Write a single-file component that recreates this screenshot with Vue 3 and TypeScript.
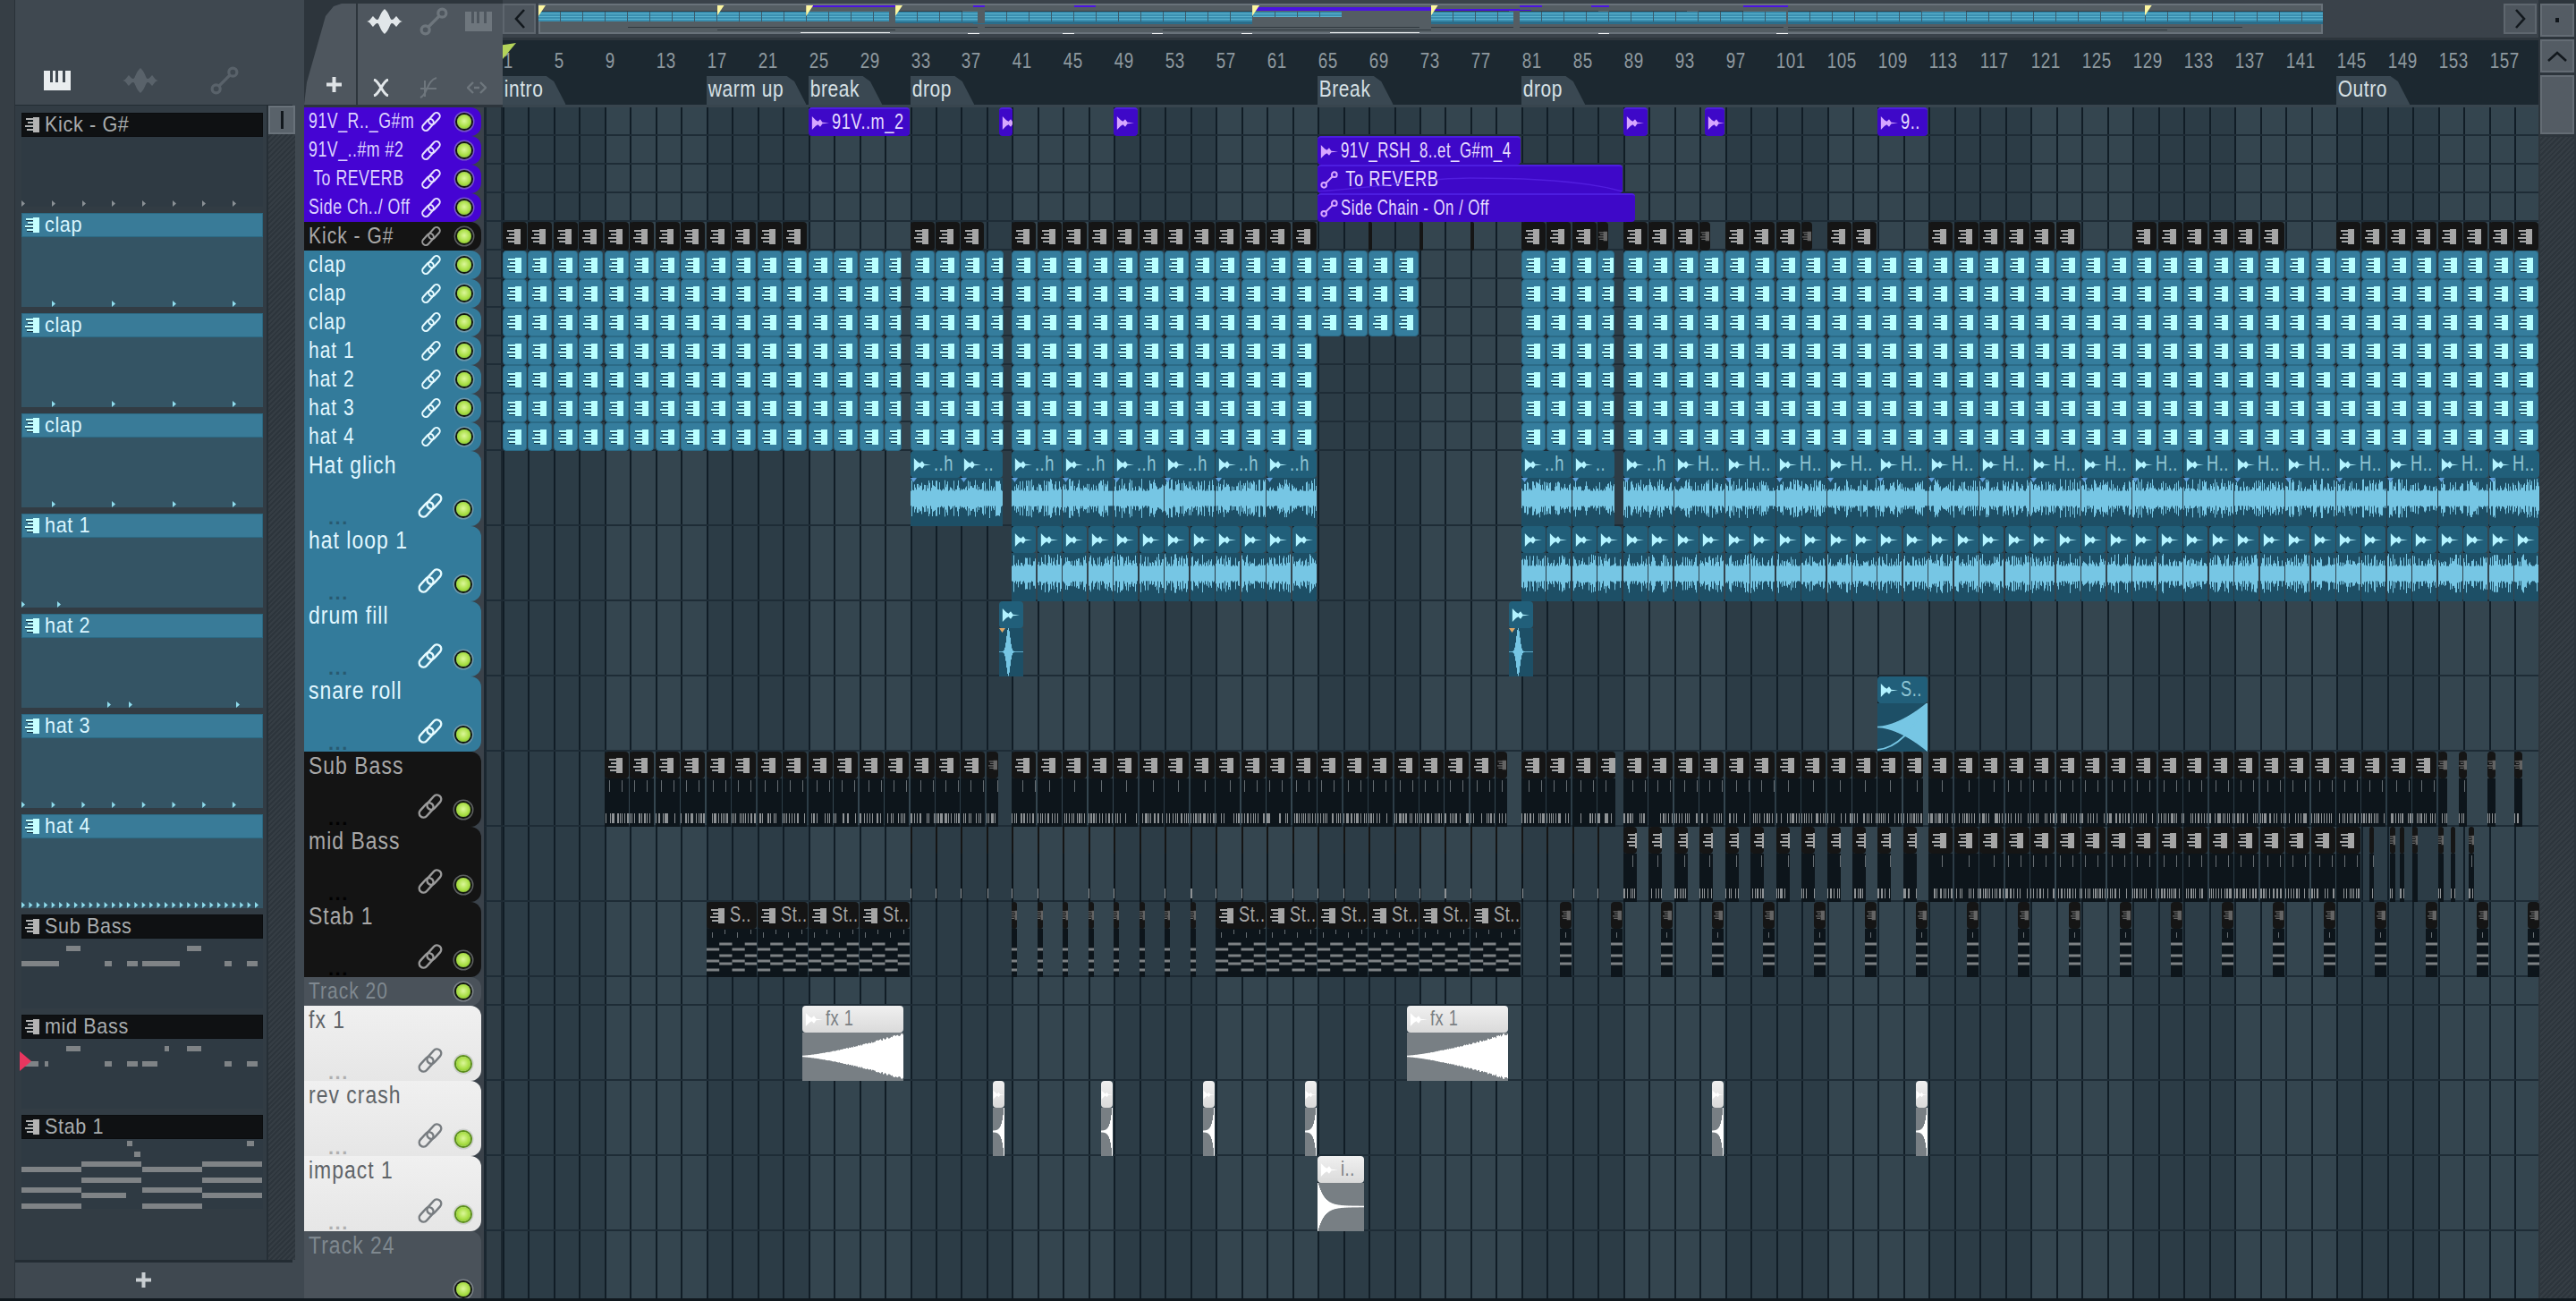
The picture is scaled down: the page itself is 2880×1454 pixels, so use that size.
<template>
  <div class="daw">
    <svg class="defs" width="0" height="0">
      <symbol id="ic-note" viewBox="0 0 16 17">
        <path d="M1 3h8v1H1z M3 7h6v1H3z M0 11h9v1H0z M2 15h7v1H2z" fill="#06141c" opacity="0.7" />
        <path d="M9 0h7v17H9z M1 1h8v2H1z M3 5h6v2H3z M0 9h9v2H0z M2 13h7v2H2z" fill="currentColor" />
      </symbol>
      <symbol id="ic-play" viewBox="0 0 24 18">
        <path d="M1 0 L6 5 L9 7 L12 4 L15 8 L24 9 L15 10 L12 14 L9 11 L6 13 L1 18 Z" fill="currentColor" />
      </symbol>
      <symbol id="ic-auto" viewBox="0 0 24 24">
        <g fill="none" stroke="currentColor" stroke-width="2.4">
          <circle cx="5" cy="19" r="3.4" />
          <circle cx="19" cy="5" r="3.4" />
          <path d="M7.5 16.5 L16.5 7.5" />
        </g>
      </symbol>
      <symbol id="ic-link" viewBox="0 0 24 24">
        <g fill="none" stroke="currentColor" stroke-width="2">
          <rect x="11.7" y="1" width="7.6" height="15" rx="3.8" transform="rotate(42 15.5 8.5)" />
          <rect x="4.7" y="8" width="7.6" height="15" rx="3.8" transform="rotate(42 8.5 15.5)" />
        </g>
      </symbol>
      <symbol id="ic-wave" viewBox="0 0 40 28">
        <path d="M0 14 C3 14 5 10 7 8 C9 10 10 12 12 12 C14 12 15 4 20 0 C25 4 26 12 28 12 C30 12 31 10 33 8 C35 10 37 14 40 14 C37 14 35 18 33 20 C31 18 30 16 28 16 C26 16 25 24 20 28 C15 24 14 16 12 16 C10 16 9 18 7 20 C5 18 3 14 0 14Z" fill="currentColor" />
      </symbol>
      <symbol id="ic-keys" viewBox="0 0 30 22">
        <path fill-rule="evenodd" d="M0 0H30V22H0Z M7 0h3v13H7Z M13 0h3v13h-3Z M21 0h3v13h-3Z" fill="currentColor" />
      </symbol>
    </svg>

    <aside class="picker">
      <div class="picker-edge"></div>
      <div class="picker-main">
        <div class="picker-tabs">
          <svg class="pt on" width="30" height="22"><use href="#ic-keys" /></svg>
          <svg class="pt" width="40" height="28"><use href="#ic-wave" /></svg>
          <svg class="pt" width="32" height="32"><use href="#ic-auto" /></svg>
        </div>
        <div class="picker-list">
          <div class="items">
            <div v-for="it in items" :key="it.top" class="item" :class="it.color">
              <div class="item-head">
                <svg class="item-ico" width="16" height="17"><use href="#ic-note" /></svg>
                <span class="item-name">{{ it.name }}</span>
              </div>
              <svg class="item-body" width="270" height="78">
                <polygon v-for="x in it.ticks" :key="x" class="tick" :points="`${x},${it.tickY} ${x + 4},${it.tickY + 3.5} ${x},${it.tickY + 7}`" />
                <rect v-for="(n, i) in it.notes" :key="i" class="note" :x="n[0]" :y="n[1]" :width="n[2]" height="6" />
              </svg>
            </div>
          </div>
          <div class="picker-scroll">
            <div class="scroll-btn"><i></i></div>
            <div class="hatch"></div>
          </div>
          <div class="marker"></div>
        </div>
        <div class="picker-add">
          <svg width="17" height="17"><path d="M6.5 0h4v6.5H17v4h-6.5V17h-4v-6.5H0v-4h6.5z" fill="#c9ced2" /></svg>
        </div>
      </div>
    </aside>

    <section class="tracks-col">
      <div class="tool-tabs">
        <div class="tab-add">
          <svg width="17" height="17"><path d="M6.5 0h4v6.5H17v4h-6.5V17h-4v-6.5H0v-4h6.5z" fill="#dfe3e6" /></svg>
        </div>
        <div class="tab-tools">
          <div class="tool-row">
            <svg class="tool lit" width="40" height="28"><use href="#ic-wave" /></svg>
            <svg class="tool" width="32" height="32"><use href="#ic-auto" /></svg>
            <svg class="tool" width="30" height="22"><use href="#ic-keys" /></svg>
          </div>
          <div class="tool-row low">
            <svg class="tool lit" width="20" height="20" viewBox="0 0 20 20"><path d="M2 1 C8 2 12 18 18 19 M18 1 C12 2 8 18 2 19" fill="none" stroke="currentColor" stroke-width="3" /></svg>
            <svg class="tool" width="22" height="24" viewBox="0 0 22 24"><path d="M2 23 C10 20 9 4 20 1 M2 13 H20 M7 4 V22" fill="none" stroke="currentColor" stroke-width="2" /></svg>
            <svg class="tool" width="22" height="14" viewBox="0 0 22 14"><path d="M7 1 L1 7 L7 13 M15 1 L21 7 L15 13 M8 7 H14" fill="none" stroke="currentColor" stroke-width="2.4" /></svg>
          </div>
        </div>
      </div>
      <div v-for="(t, i) in tracks" :key="i" class="track" :class="t.height">
        <div class="track-label" :class="t.color">
          <span class="track-name">{{ t.name }}</span>
          <div class="track-ctl">
            <span v-if="t.height === 'tall'" class="dots">...</span>
            <svg v-if="t.link" class="link" viewBox="0 0 24 24"><use href="#ic-link" /></svg>
            <span class="led"></span>
          </div>
        </div>
        <div class="gutter"></div>
      </div>
    </section>

    <section class="arrange">
      <div class="ov-bar">
        <div class="nav-btn">
          <svg width="14" height="24" viewBox="0 0 14 24"><path d="M12 2 L3 12 L12 22" fill="none" stroke="#12181d" stroke-width="2.6" /></svg>
        </div>
        <div class="overview">
          <div
            v-for="(s, i) in overviewSpans"
            :key="i"
            class="ov-span"
            :class="s.cls"
            :style="{ left: s.left + 'px', top: s.top + 'px', width: s.width + 'px', height: s.height + 'px' }"
          ></div>
          <div v-for="m in markers" :key="m.bar" class="ov-flag" :style="{ left: ovX(m.bar) + 'px' }"></div>
        </div>
        <div class="nav-btn">
          <svg width="14" height="24" viewBox="0 0 14 24"><path d="M2 2 L11 12 L2 22" fill="none" stroke="#12181d" stroke-width="2.6" /></svg>
        </div>
      </div>
      <div class="timeline">
        <div class="ruler">
          <span v-for="n in barNumbers" :key="n">{{ n }}</span>
        </div>
        <div class="marks">
          <span v-for="m in markers" :key="m.bar" class="mark" :style="{ left: barX(m.bar) + 'px' }">{{ m.name }}</span>
        </div>
        <div class="playhead"></div>
      </div>
      <div class="rows">
        <div v-for="r in rows" :key="r.id" class="row" :class="r.height">
          <div
            v-for="(c, i) in r.clips"
            :key="i"
            class="clip"
            :class="[r.color, r.kind, r.wave, { thin: c.width < 15, hair: c.width < 6 }]"
            :style="{ left: c.left + 'px', width: c.width + 'px' }"
          >
            <div class="clip-head">
              <svg v-if="r.kind === 'pat'" class="ico-note"><use href="#ic-note" /></svg>
              <svg v-else-if="r.kind === 'auto'" class="ico-auto"><use href="#ic-auto" /></svg>
              <svg v-else class="ico-play"><use href="#ic-play" /></svg>
              <span v-if="c.label" class="clip-name" :class="{ long: c.label.length > 15 }">{{ c.label }}</span>
            </div>
            <svg v-if="r.height === 'tall'" class="clip-body" :width="c.width" height="53">
              <path class="p2" :d="c.d2" />
              <path class="p1" :d="c.d1" />
            </svg>
            <i v-if="r.height === 'tall' && (r.wave === 'spike' || (r.wave === 'noise' && c.label))" class="slice"></i>
            <svg v-if="c.d3" class="clip-curve" :width="c.width" height="30"><path :d="c.d3" /></svg>
          </div>
        </div>
      </div>
    </section>

    <aside class="vscroll">
      <div class="vbtn"><i></i></div>
      <div class="vbtn">
        <svg width="24" height="12" viewBox="0 0 24 12"><path d="M2 11 L12 2 L22 11" fill="none" stroke="#12181d" stroke-width="2.6" /></svg>
      </div>
      <div class="vthumb"></div>
      <div class="hatch"></div>
    </aside>
  </div>
</template>

<script setup lang="ts">
const BAR = 14.236
const OV_BAR = 12.47

type Clip = { left: number; width: number; label?: string; d1?: string; d2?: string; d3?: string }
type Seg = [number, number, string?]

const barX = (b: number) => (b - 1) * BAR
const ovX = (b: number) => (b - 1) * OV_BAR

const barNumbers: number[] = []
for (let n = 1; n <= 157; n += 4) barNumbers.push(n)

const markers = [
  { bar: 1, name: 'intro' },
  { bar: 17, name: 'warm up' },
  { bar: 25, name: 'break' },
  { bar: 33, name: 'drop' },
  { bar: 65, name: 'Break' },
  { bar: 81, name: 'drop' },
  { bar: 145, name: 'Outro' },
]

// repeat a clip every `step` bars, the last one gets cut at `to`
function run(from: number, to: number, step = 2, len = step, label?: string): Seg[] {
  const out: Seg[] = []
  for (let b = from; b < to; b += step) out.push([b, Math.min(len, to - b), label])
  return out
}

let seed = 7
function rnd() {
  seed = (seed * 16807) % 2147483647
  return seed / 2147483647
}

function vline(x: number, y1: number, y2: number) {
  return `M${x + 0.5} ${y1.toFixed(1)}V${y2.toFixed(1)}`
}

function wave(w: number, h: number, kind: string) {
  let d = ''
  const mid = h / 2
  for (let x = 0; x < w; x++) {
    const t = x / Math.max(w - 1, 1)
    let a = 0
    if (kind === 'noise') {
      const r = rnd()
      a = 0.36 + r * r * 0.6
    }
    if (kind === 'rise') a = Math.pow(t, 1.35) * (0.86 + rnd() * 0.12) + 0.03
    if (kind === 'decay') a = Math.exp(-t * 7) + 0.03
    if (kind === 'rev') a = Math.exp(-(1 - t) * 5) + 0.03
    if (kind === 'spike') a = Math.exp(-Math.pow((t - 0.38) * 9, 2)) + 0.015
    if (kind === 'roll') a = Math.pow(t, 1.7) + 0.03
    d += vline(x, mid - a * mid, mid + a * mid)
  }
  return d
}

function subNotes(w: number, start: number) {
  let d1 = ''
  let d2 = ''
  for (let x = start % 14; x < w; x += 14.2) d1 += vline(Math.round(x) + 3, 2, 15)
  for (let x = 0; x < w; x += 1 + Math.floor(rnd() * 3)) {
    if (rnd() > 0.3) d2 += vline(x, 39, 50)
  }
  return { d1, d2 }
}

function stabNotes(w: number, left: number) {
  let d1 = ''
  let d2 = ''
  for (let x = 6; x < w; x += 14.2) d1 += vline(Math.round(x), x % 28 > 14 ? 1 : 4, x % 28 > 14 ? 6 : 10)
  const ys = [17, 23, 30, 36, 39, 46]
  const step = 14.24
  for (let i = 0; i < ys.length; i++) {
    const first = Math.round(left / step)
    for (let k = 0; k * step < w; k++) {
      const odd = (first + k) % 2 === 0
      if (odd === (i % 2 === 0)) continue
      const x1 = k * step
      d2 += `M${x1.toFixed(1)} ${ys[i]}H${Math.min(x1 + step, w).toFixed(1)}`
    }
  }
  return { d1, d2 }
}

const autoCurve = (w: number) => `M0 30 C${w * 0.25} 24 ${w * 0.35} 15 ${w * 0.5} 15 C${w * 0.75} 15 ${w * 0.9} 20 ${w} 30`

type RowDef = {
  id: number
  name: string
  color: string
  height: 'small' | 'tall'
  kind: string
  wave?: string
  link?: boolean
  segs: Seg[]
}

const claps: Seg[] = [
  ...run(1, 31), [31, 1.4], ...run(33, 39), [39, 1.4], ...run(41, 73),
  ...run(81, 87), [87, 1.4], ...run(89, 113), ...run(113, 161),
]
const hats: Seg[] = [
  ...run(1, 31), [31, 1.4], ...run(33, 39), [39, 1.4], ...run(41, 65),
  ...run(81, 87), [87, 1.4], ...run(89, 113), ...run(113, 161),
]

const defs: Omit<RowDef, 'id'>[] = [
  { name: '91V_R.._G#m', color: 'purple', height: 'small', kind: 'aud', link: true, segs: [[25, 8, '91V..m_2'], [40, 1.1], [49, 2], [89, 2], [95.4, 1.6], [109, 4, '9..']] },
  { name: '91V_..#m #2', color: 'purple', height: 'small', kind: 'aud', link: true, segs: [[65, 16, '91V_RSH_8..et_G#m_4']] },
  { name: ' To REVERB', color: 'purple', height: 'small', kind: 'auto', link: true, segs: [[65, 24, ' To REVERB']] },
  { name: 'Side Ch../ Off', color: 'purple', height: 'small', kind: 'auto', link: true, segs: [[65, 25, 'Side Chain - On / Off']] },
  {
    name: 'Kick - G#', color: 'black', height: 'small', kind: 'pat', link: true,
    segs: [
      ...run(1, 25), ...run(33, 38.9), ...run(41, 65), [69, 0.35], [73, 0.35], [77, 0.35],
      ...run(81, 87), [87, 0.9], ...run(89, 95), [95, 0.9], ...run(97, 103), [103, 0.9],
      ...run(105, 109), ...run(113, 125), ...run(129, 141), ...run(145, 161),
    ],
  },
  { name: 'clap', color: 'teal', height: 'small', kind: 'pat', link: true, segs: claps },
  { name: 'clap', color: 'teal', height: 'small', kind: 'pat', link: true, segs: claps },
  { name: 'clap', color: 'teal', height: 'small', kind: 'pat', link: true, segs: claps },
  { name: 'hat 1', color: 'teal', height: 'small', kind: 'pat', link: true, segs: hats },
  { name: 'hat 2', color: 'teal', height: 'small', kind: 'pat', link: true, segs: hats },
  { name: 'hat 3', color: 'teal', height: 'small', kind: 'pat', link: true, segs: hats },
  { name: 'hat 4', color: 'teal', height: 'small', kind: 'pat', link: true, segs: hats },
  {
    name: 'Hat glich', color: 'teal', height: 'tall', kind: 'aud', wave: 'noise', link: true,
    segs: [
      [33, 4, '..h'], [37, 3.4, '..'], ...run(41, 65, 4, 4, '..h'), [81, 4, '..h'], [85, 3.4, '..'],
      [89, 4, '..h'], ...run(93, 113, 4, 4, 'H..'), ...run(113, 161, 4, 4, 'H..'),
    ],
  },
  { name: 'hat loop 1', color: 'teal', height: 'tall', kind: 'aud', wave: 'noise', link: true, segs: [...run(41, 65), ...run(81, 113), ...run(113, 161)] },
  { name: 'drum fill', color: 'teal', height: 'tall', kind: 'aud', wave: 'spike', link: true, segs: [[40, 2], [80, 2]] },
  { name: 'snare roll', color: 'teal', height: 'tall', kind: 'aud', wave: 'roll', link: true, segs: [[109, 4, 'S..']] },
  {
    name: 'Sub Bass', color: 'black', height: 'tall', kind: 'pat', wave: 'sub', link: true,
    segs: [
      ...run(9, 33), ...run(33, 40), ...run(41, 80), ...run(81, 88.5), ...run(89, 112.6),
      ...run(113, 153.8), [154.6, 0.7], [156.9, 0.7], [159, 0.7],
    ],
  },
  {
    name: 'mid Bass', color: 'black', height: 'tall', kind: 'pat', wave: 'sub', link: true,
    segs: [
      ...run(33, 89, 2, 0.22), ...run(89, 113, 2, 1.1), ...run(113, 147),
      [147.6, 0.4], [149.2, 0.5], [150, 0.4], [151, 0.5], [153, 0.5], [154, 0.4], [155.4, 0.5],
    ],
  },
  {
    name: 'Stab 1', color: 'black', height: 'tall', kind: 'pat', wave: 'stab', link: true,
    segs: [
      [17, 4, 'S..'], ...run(21, 33, 4, 4, 'St..'), ...run(41, 57, 2, 0.5),
      ...run(57, 81, 4, 4, 'St..'), ...run(84, 161, 4, 1),
    ],
  },
  { name: 'Track 20', color: 'grey', height: 'small', kind: 'none', segs: [] },
  { name: 'fx 1', color: 'white', height: 'tall', kind: 'aud', wave: 'rise', link: true, segs: [[24.5, 8, 'fx 1'], [72, 8, 'fx 1']] },
  { name: 'rev crash', color: 'white', height: 'tall', kind: 'aud', wave: 'rev', link: true, segs: [[39.5, 1], [48, 1], [56, 1], [64, 1], [96, 1], [112, 1]] },
  { name: 'impact 1', color: 'white', height: 'tall', kind: 'aud', wave: 'decay', link: true, segs: [[65, 3.7, 'i..']] },
  { name: 'Track 24', color: 'grey', height: 'tall', kind: 'none', segs: [] },
]

const rows = defs.map((def, id) => {
  const clips: Clip[] = def.segs.map(([at, len, label]) => {
    const left = Math.round(barX(at))
    const width = Math.max(Math.round(len * BAR) - 1, 2)
    const clip: Clip = { left, width, label }
    if (def.height === 'tall') {
      if (def.wave === 'sub') Object.assign(clip, subNotes(width, left))
      else if (def.wave === 'stab') Object.assign(clip, stabNotes(width, left))
      else if (def.wave === 'noise') clip.d2 = wave(width, 46, 'noise')
      else clip.d2 = wave(width, 53, def.wave ?? 'noise')
      if (def.wave === 'roll') clip.d1 = `M0 52 C${width * 0.4} 50 ${width * 0.7} 30 ${width} 1`
    }
    if (def.name.includes('REVERB')) clip.d3 = autoCurve(width)
    return clip
  })
  return { ...def, id, clips }
})
const tracks = defs

const items = [
  { name: 'Kick - G#', color: 'dark', tickY: 71, ticks: [0, 34, 68, 101, 135, 169, 202, 236], notes: [] },
  { name: 'clap', color: 'blue', tickY: 71, ticks: [34, 101, 169, 236], notes: [] },
  { name: 'clap', color: 'blue', tickY: 71, ticks: [34, 101, 169, 236], notes: [] },
  { name: 'clap', color: 'blue', tickY: 71, ticks: [34, 101, 169, 236], notes: [] },
  { name: 'hat 1', color: 'blue', tickY: 71, ticks: [0, 40], notes: [] },
  { name: 'hat 2', color: 'blue', tickY: 71, ticks: [96, 120, 240], notes: [] },
  { name: 'hat 3', color: 'blue', tickY: 71, ticks: run(0, 260, 33.7).map((s) => s[0]), notes: [] },
  { name: 'hat 4', color: 'blue', tickY: 71, ticks: run(0, 264, 8.42).map((s) => s[0]), notes: [] },
  {
    name: 'Sub Bass', color: 'dark', tickY: -20, ticks: [],
    notes: [[50, 8, 16], [185, 8, 16], [0, 25, 42], [93, 25, 8], [118, 25, 12], [135, 25, 42], [227, 25, 8], [252, 25, 12]],
  },
  {
    name: 'mid Bass', color: 'dark', tickY: -20, ticks: [],
    notes: [[50, 8, 16], [160, 8, 5], [185, 8, 16], [0, 25, 19], [26, 25, 4], [93, 25, 8], [118, 25, 12], [135, 25, 17], [227, 25, 8], [252, 25, 12]],
  },
  {
    name: 'Stab 1', color: 'dark', tickY: -20, ticks: [],
    notes: [
      [118, 2, 6], [252, 2, 8], [126, 14, 7], [67, 25, 67], [202, 25, 67], [0, 31, 67], [135, 31, 67],
      [67, 43, 67], [202, 43, 67], [0, 54, 67], [135, 54, 67], [67, 60, 50], [202, 60, 67], [0, 72, 67], [135, 72, 67],
    ],
  },
].map((it, i) => ({ ...it, top: i, notes: it.notes as number[][] }))

const ovRows: { cls: string; top: number; height: number; spans: number[][] }[] = [
  { cls: 'ov-purple', top: 6, height: 2, spans: [[25, 33], [40, 41], [49, 51], [89, 91], [95.4, 97], [109, 113]] },
  { cls: 'ov-purple', top: 8, height: 2, spans: [[65, 81]] },
  { cls: 'ov-purple', top: 10, height: 1, spans: [[65, 89]] },
  { cls: 'ov-purple', top: 11, height: 1, spans: [[65, 90]] },
  { cls: 'ov-dark', top: 12, height: 1, spans: [[1, 25], [33, 39], [41, 65], [81, 88], [89, 96], [97, 104], [105, 109], [113, 125], [129, 141], [145, 161]] },
  { cls: 'ov-blue', top: 13, height: 6, spans: [[1, 32.4], [33, 40.4], [41, 73], [81, 88.4], [89, 112.9], [113, 161]] },
  { cls: 'ov-blue', top: 19, height: 5, spans: [[1, 32.4], [33, 40.4], [41, 65], [81, 88.4], [89, 112.9], [113, 161]] },
  { cls: 'ov-blue2', top: 24, height: 2, spans: [[33, 40.4], [41, 65], [81, 88.4], [89, 112.9], [113, 161]] },
  { cls: 'ov-blue2', top: 26, height: 1, spans: [[40, 42], [41, 65], [81, 88.4], [89, 112.9], [113, 161]] },
  { cls: 'ov-dark', top: 30, height: 1, spans: [[9, 33], [33, 40.4], [41, 80], [81, 88.4], [89, 112.6], [113, 153.8]] },
  { cls: 'ov-dark', top: 33, height: 1, spans: [[17, 33], [57, 81], [113, 147]] },
  { cls: 'ov-white', top: 36, height: 1, spans: [[24.5, 32.5], [72, 80]] },
  { cls: 'ov-white', top: 37, height: 2, spans: [[39.5, 40.5], [48, 49], [56, 57], [64, 65], [96, 97], [112, 113]] },
  { cls: 'ov-white', top: 39, height: 1, spans: [[65, 68.7]] },
]
const overviewSpans = ovRows.flatMap((r) =>
  r.spans.map(([a, b]) => ({
    cls: r.cls,
    top: r.top - 4,
    height: r.height,
    left: ovX(a),
    width: (b - a) * OV_BAR,
  })),
)
</script>

<style>
html,
body {
  margin: 0;
  background: #10181e;
}
</style>

<style scoped>
.daw {
  display: flex;
  width: 2880px;
  height: 1454px;
  overflow: hidden;
  box-sizing: border-box;
  border-bottom: 3px solid #10181e;
  background: #3a424a;
  font-family: "Liberation Sans", sans-serif;
  font-size: 24px;
  letter-spacing: 0.7px;
  color: #cfd6da;
}
.defs {
  position: absolute;
}

/* left picker */
.picker {
  display: flex;
  flex: 0 0 340px;
  min-width: 0;
  background: #3f4850;
}
.picker-edge {
  flex: 0 0 16px;
  background: #363e45;
  border-right: 1px solid #2a3138;
}
.picker-main {
  display: flex;
  flex: 1;
  flex-direction: column;
  min-width: 0;
}
.picker-tabs {
  display: flex;
  align-items: center;
  height: 117px;
  box-sizing: border-box;
  padding: 62px 0 0 32px;
  gap: 58px;
}
.pt {
  color: #59626a;
}
.pt.on {
  color: #e9edef;
}
.picker-list {
  position: relative;
  display: flex;
  flex: 0 0 1294px;
  gap: 4px;
  width: 310px;
  box-sizing: border-box;
  padding: 3px 0 0 7px;
  background: #323c44;
  border-top: 1px solid #232c33;
  border-right: 2px solid #232c33;
  border-bottom: 3px solid #232c33;
}
.items {
  display: flex;
  flex-direction: column;
  flex: 0 0 270px;
  gap: 7px;
  padding-top: 5px;
}
.item {
  display: flex;
  flex-direction: column;
  height: 105px;
}
.item-head {
  display: flex;
  align-items: center;
  gap: 6px;
  height: 27px;
  flex: 0 0 27px;
  box-sizing: border-box;
  border: 1px solid #0b0d0f;
  line-height: 25px;
}
.item-name {
  flex: 0 0 200px;
  margin: -2px -20px 0 0;
  white-space: nowrap;
  transform: scaleX(0.9);
  transform-origin: 0 50%;
}
.item-ico {
  flex: none;
  margin-left: 3px;
}
.item.dark .item-head {
  background: #0f1113;
  color: #a8acae;
}
.item.dark .item-ico {
  color: #b4b4b4;
}
.item.blue .item-head {
  background: #397b98;
  border-color: #2c6a84;
  color: #d9f6ff;
}
.item.blue .item-ico {
  color: #c5ffff;
}
.item.dark .item-body {
  background: #2f3a43;
}
.item.blue .item-body {
  background: #345464;
}
.item-body {
  display: block;
}
.tick {
  fill: #8fdcec;
}
.item.dark .tick {
  fill: #8a9095;
}
.note {
  fill: #7f8386;
}
.picker-scroll {
  display: flex;
  flex: 0 0 30px;
  flex-direction: column;
  border-left: 2px solid #262f36;
  margin-top: -3px;
}
.scroll-btn {
  display: flex;
  align-items: center;
  justify-content: center;
  height: 28px;
  background: #59626a;
  border: 2px solid #69727a;
}
.scroll-btn i {
  width: 3px;
  height: 20px;
  background: #12181d;
}
.hatch {
  flex: 1;
  background: repeating-linear-gradient(135deg, #353d44 0 2px, #2d353c 2px 4px);
}
.marker {
  position: absolute;
  left: 5px;
  top: 1057px;
  width: 13px;
  height: 22px;
  background: #e8365f;
  clip-path: polygon(0 0, 100% 50%, 0 100%);
}
.picker-add {
  display: flex;
  flex: 1;
  align-items: center;
  justify-content: center;
  width: 286px;
  padding-bottom: 2px;
}

/* track labels */
.tracks-col {
  display: flex;
  flex: 0 0 222px;
  min-width: 0;
  flex-direction: column;
}
.tool-tabs {
  display: flex;
  flex: 0 0 120px;
  box-sizing: border-box;
  padding: 4px 0 3px;
  gap: 2px;
  background: #2d353c;
}
.tab-add {
  display: flex;
  align-items: flex-end;
  justify-content: center;
  flex: 0 0 58px;
  box-sizing: border-box;
  padding: 0 0 14px 8px;
  background: #4e565e;
  clip-path: polygon(0 100%, 3px 88px, 24px 14px, 33px 3px, 42px 0, 100% 0, 100% 100%);
}
.tab-tools {
  display: flex;
  flex: 1;
  flex-direction: column;
  justify-content: space-between;
  background: #4e565e;
  padding: 4px 0 6px;
}
.tool-row {
  display: flex;
  align-items: center;
  justify-content: space-around;
  padding-right: 2px;
}
.tool-row.low {
  padding-bottom: 1px;
}
.tool {
  color: #6e767d;
}
.tool.lit {
  color: #e1e6e9;
}
.track {
  display: flex;
  flex: none;
}
.track.small {
  height: 32px;
}
.track.tall {
  height: 84px;
}
.track-label {
  display: flex;
  flex: 0 0 198px;
  min-width: 0;
  box-sizing: border-box;
  padding-left: 5px;
  border-radius: 0 12px 12px 0;
}
.small .track-label {
  align-items: center;
}
.tall .track-label {
  flex-direction: column;
  justify-content: space-between;
}
.track-name {
  white-space: pre;
  transform-origin: 0 50%;
}
.small .track-name {
  flex: 0 0 165px;
  margin: -3px -40px 0 0;
  font-size: 25px;
  letter-spacing: 1.2px;
  line-height: 30px;
  transform: scaleX(0.84);
}
.small .purple .track-name {
  font-size: 24px;
  letter-spacing: 0.7px;
  transform: scaleX(0.74);
}
.tall .track-name {
  font-size: 27px;
  letter-spacing: 1.2px;
  line-height: 28px;
  padding-top: 2px;
  transform: scaleX(0.85);
}
.track-ctl {
  display: flex;
  align-items: center;
  margin-left: auto;
}
.tall .track-ctl {
  width: 100%;
  align-items: flex-end;
  padding-bottom: 11px;
}
.dots {
  margin: 0 auto -10px 22px;
  font-weight: bold;
  font-size: 22px;
  line-height: 16px;
  letter-spacing: 1.5px;
  opacity: 0.3;
  color: #111;
}
.link {
  flex: none;
  width: 24px;
  height: 24px;
  color: #e6e0ff;
}
.tall .link {
  width: 30px;
  height: 30px;
  margin-bottom: -3px;
}
.led {
  flex: none;
  width: 16px;
  height: 16px;
  margin: 0 12px 0 17px;
  border-radius: 50%;
  background: radial-gradient(circle at 50% 45%, #dcf79a 0, #a8de44 55%, #6fae1c 100%);
  box-shadow: 0 0 0 2px #12170d, 0 0 0 3.5px rgba(180, 185, 190, 0.45);
}
.tall .led {
  margin-left: 14px;
}
.track-label.purple {
  background: #4504d3;
  color: #dcd2ff;
}
.track-label.teal {
  background: #337b9b;
  color: #e1f7ff;
}
.track-label.teal .link {
  color: #e6fbff;
}
.track-label.black {
  background: #141414;
  color: #a8a8a8;
}
.track-label.black .link {
  color: #9a9a9a;
}
.track-label.black .dots {
  color: #000;
  opacity: 0.9;
}
.track-label.grey {
  background: #4a525a;
  color: #7f888f;
}
.track-label.white {
  background: linear-gradient(#f0f0f0, #e6e6e6);
  color: #5f6468;
}
.track-label.white .link {
  color: #777c80;
}
.track-label.white .dots {
  color: #333;
}
.track-label.white .led {
  box-shadow: 0 0 0 2px #5c8f1c, 0 0 0 3.5px rgba(120, 130, 120, 0.25);
}
.gutter {
  flex: 1;
  margin-left: 3px;
  background: #2f3d46;
  border-left: 3px solid #1b2730;
  border-right: 2px solid #1b2730;
  border-bottom: 2px solid #1e2c36;
}

/* arrangement */
.arrange {
  display: flex;
  flex: 0 0 2276px;
  flex-direction: column;
  min-width: 0;
  background: #1c2830;
}
.ov-bar {
  display: flex;
  flex: 0 0 45px;
  box-sizing: border-box;
  padding: 4px 0;
  gap: 3px;
  background: #3a424a;
  border-bottom: 3px solid #2d353c;
}
.nav-btn {
  display: flex;
  flex: 0 0 37px;
  align-items: center;
  justify-content: center;
  box-sizing: border-box;
  background: #4e565e;
  border: 2px solid #5e666e;
}
.overview {
  position: relative;
  flex: 0 0 1995px;
  overflow: hidden;
  background: #545d63;
  box-shadow: inset 0 0 0 2px #69727a;
  margin-right: 199px;
}
.ov-span {
  position: absolute;
}
.ov-purple {
  background: #4b14e0;
}
.ov-dark {
  background: #30393f;
}
.ov-white {
  background: #f2f4f5;
}
.ov-blue {
  background:
    repeating-linear-gradient(90deg, transparent 0 24px, #3c5a6a 24px 25px),
    repeating-linear-gradient(180deg, #3a8fb0 0 2px, #5ab0cc 2px 3px);
}
.ov-blue2 {
  background: #2a6e8c;
}
.ov-flag {
  position: absolute;
  top: 2px;
  width: 8px;
  height: 12px;
  background: #fdf6a0;
  clip-path: polygon(0 0, 100% 0, 0 100%);
}
.timeline {
  position: relative;
  display: flex;
  flex: 0 0 75px;
  box-sizing: border-box;
  flex-direction: column;
  border-bottom: 3px solid #38454e;
}
.ruler {
  display: flex;
  flex: 0 0 40px;
  height: 40px;
  min-height: 0;
  color: #8e999f;
  font-size: 23px;
  line-height: 47px;
  letter-spacing: 0.6px;
}
.ruler span {
  flex: 0 0 56.944px;
  box-sizing: border-box;
  padding-left: 1px;
  transform: scaleX(0.82);
  transform-origin: 0 50%;
}
.marks {
  position: relative;
  flex: 1;
}
.mark {
  position: absolute;
  top: 0;
  bottom: 0;
  padding: 0 30px 0 2px;
  background: #3a4852;
  color: #d6e0e5;
  font-size: 25px;
  line-height: 28px;
  white-space: nowrap;
  transform: scaleX(0.84);
  transform-origin: 0 50%;
  clip-path: polygon(0 0, calc(100% - 26px) 0, calc(100% - 16px) 6px, 100% 100%, 0 100%);
}
.playhead {
  position: absolute;
  left: 0;
  top: 3px;
  width: 15px;
  height: 18px;
  background: #b4d45a;
  clip-path: polygon(0 100%, 0 12%, 100% 0);
}
.rows {
  flex: 1;
  min-height: 0;
  background:
    repeating-linear-gradient(90deg, #111d26 0 2px, transparent 2px 28.472px),
    repeating-linear-gradient(90deg, #2c3c46 0 113.888px, #34454f 113.888px 227.776px);
}
.row {
  position: relative;
  box-sizing: border-box;
  border-bottom: 2px solid #1e2c36;
}
.row.small {
  height: 32px;
}
.row.tall {
  height: 84px;
}

/* clips */
.clip {
  position: absolute;
  top: 0;
  bottom: -2px;
  overflow: hidden;
  display: flex;
  flex-direction: column;
}
.clip-head {
  display: flex;
  flex: none;
  align-items: center;
  gap: 3px;
  height: 100%;
  box-sizing: border-box;
  border-radius: 4px;
  overflow: hidden;
  padding-left: 3px;
  line-height: 28px;
  white-space: nowrap;
}
.row.tall .clip-head {
  height: 30px;
}
.clip-name {
  flex: none;
  margin-top: -2px;
  white-space: pre;
  transform: scaleX(0.76);
  transform-origin: 0 50%;
}
.clip-name.long {
  transform: scaleX(0.7);
}
.ico-note {
  flex: none;
  width: 16px;
  height: 17px;
  margin-left: 1px;
  margin-right: 3px;
}
.ico-play {
  flex: none;
  width: 20px;
  height: 15px;
}
.ico-auto {
  flex: none;
  width: 20px;
  height: 20px;
  color: #d8a6ff;
}
.clip.thin .clip-head {
  padding-left: 0;
  justify-content: center;
}
.clip.thin .ico-note {
  margin: 0;
  width: 10px;
  height: 22px;
  opacity: 0.55;
}
.clip.thin .ico-play {
  width: 13px;
}
.clip.hair .ico-note {
  display: none;
}
.clip-body {
  display: block;
  flex: 1;
}
.clip-curve {
  position: absolute;
  left: 0;
  top: 0;
  opacity: 0.7;
}
.clip-curve path {
  fill: none;
  stroke: #5a26e8;
  stroke-width: 1.5;
}
.slice {
  position: absolute;
  left: 0;
  top: 30px;
  width: 7px;
  height: 5px;
  background: #5f9fdc;
  clip-path: polygon(0 0, 100% 0, 50% 100%);
}
.clip.spike .slice {
  background: #e0a868;
}
.clip.purple .clip-head {
  background: #3e08c8;
  border-top: 2px solid #4d1de0;
  color: #e6dcff;
}
.clip.purple .ico-play {
  color: #d6a6ff;
}
.clip.teal .clip-head {
  background: #357d9d;
  border: 1px solid #2b6b87;
  color: #b9ffff;
}
.clip.teal.aud .clip-head {
  background: #215f7a;
  border: 0;
  color: #8ec5d4;
}
.clip.teal.aud .ico-play {
  color: #b3f3ff;
}
.clip.teal .clip-body {
  background: #1d4f66;
}
.clip.teal .clip-body path {
  fill: none;
  stroke: #76c6e4;
  stroke-width: 1;
}
.clip.roll .clip-body .p1 {
  stroke-width: 2;
}
.clip.black .clip-head {
  background: #151515;
  color: #a6a6a6;
}
.clip.black .clip-body {
  background: #0d151b;
}
.clip.black .p1 {
  fill: none;
  stroke: #666d72;
  stroke-width: 1;
}
.clip.black .p2 {
  fill: none;
  stroke: #7d8184;
  stroke-width: 3;
}
.clip.black.sub .p2 {
  stroke: #8d9194;
  stroke-width: 1;
}
.clip.white .clip-head {
  background: linear-gradient(#f0f0f0, #dadada);
  color: #7a7f83;
}
.clip.white .ico-play {
  color: #ffffff;
}
.clip.white .clip-body {
  background: #787f84;
}
.clip.white .clip-body .p2 {
  fill: none;
  stroke: #ffffff;
  stroke-width: 1;
}

/* right scrollbar */
.vscroll {
  display: flex;
  flex: 1;
  flex-direction: column;
  box-sizing: border-box;
  padding: 4px 2px 0;
  gap: 3px;
  background: #2d353c;
}
.vbtn {
  display: flex;
  align-items: center;
  justify-content: center;
  flex: 0 0 37px;
  box-sizing: border-box;
  background: #545c64;
  border: 2px solid #646c74;
}
.vbtn i {
  width: 4px;
  height: 5px;
  background: #10161b;
}
.vthumb {
  flex: 0 0 66px;
  box-sizing: border-box;
  background: #545c64;
  border: 2px solid #646c74;
}
</style>
